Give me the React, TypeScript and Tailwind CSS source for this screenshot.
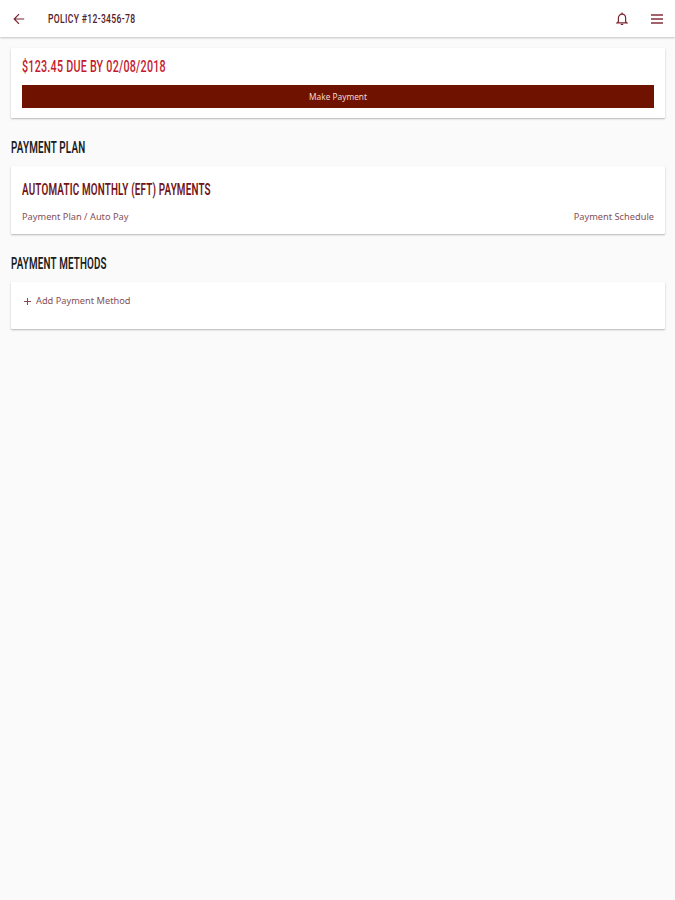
import type { ReactNode } from "react";
import clsx from "clsx";

// Narrow display lettering; callers pick the size and horizontal squeeze.
function Display({ className, children }: { className?: string; children: ReactNode }) {
  return (
    <span
      className={clsx(
        "block w-max origin-left whitespace-nowrap font-['Roboto',sans-serif] uppercase",
        className
      )}
    >
      {children}
    </span>
  );
}

function Card({ className, children }: { className?: string; children: ReactNode }) {
  return (
    <div
      className={clsx(
        "rounded-[1px] bg-white px-[11px] shadow-[0_1px_2px_rgba(0,0,0,0.28)]",
        className
      )}
    >
      {children}
    </div>
  );
}

function BackIcon() {
  return (
    <svg width="12" height="12" viewBox="0 0 12 12" fill="none" stroke="#7c2430" strokeWidth="1.2">
      <path d="M11.2 6H1.4M6 1.2 1.2 6 6 10.8" />
    </svg>
  );
}

function BellIcon() {
  return (
    <svg width="12" height="14" viewBox="0 0 12 14" fill="none" stroke="#7c2430" strokeWidth="1.2">
      <path d="M2.4 9.8V6.1C2.4 3.8 3.9 2.2 6 2.2s3.6 1.6 3.6 3.9v3.7l1.2 1H1.2l1.2-1Z" />
      <path d="M6 .6v1.6M4.8 12.4h2.4" />
    </svg>
  );
}

function MenuIcon() {
  return (
    <svg width="12" height="10" viewBox="0 0 12 10" fill="none" stroke="#84303c" strokeWidth="1.3">
      <path d="M0 1h12M0 5h12M0 9h12" />
    </svg>
  );
}

export default function App() {
  return (
    <div className="min-h-screen bg-[#fafafa] font-['Noto_Sans',sans-serif] text-[9.25px] text-[#855058]">
      <header className="flex h-[37px] items-center bg-white pr-3 pl-[13px] shadow-[0_1px_2px_rgba(0,0,0,0.22)]">
        <button aria-label="Back">
          <BackIcon />
        </button>
        <h1 className="ml-[23px] flex-1">
          <Display className="scale-x-[0.66] text-[13px] leading-[37px] font-medium tracking-[0.5px] text-[#55202a]">
            Policy #12-3456-78
          </Display>
        </h1>
        <button aria-label="Notifications">
          <BellIcon />
        </button>
        <button aria-label="Menu" className="ml-[23px]">
          <MenuIcon />
        </button>
      </header>

      <main className="pt-[11px] pr-[10px] pl-[11px]">
        <Card className="h-[70px] pt-[7px]">
          <Display className="scale-x-[0.63] text-[17px] leading-[22px] font-medium tracking-[0.4px] text-[#c4192d]">
            $123.45 due by 02/08/2018
          </Display>
          <button className="mt-2 block h-[23px] w-full bg-[#701200] text-[8.3px] leading-[23px] text-[#eed9d6]">
            Make Payment
          </button>
        </Card>

        <h2 className="mt-[18px]">
          <Display className="scale-x-[0.58] text-[17px] leading-[22px] font-semibold tracking-[0.3px] text-[#1c1c1c]">
            Payment Plan
          </Display>
        </h2>
        <Card className="mt-2 h-[68px] pt-[12px]">
          <Display className="scale-x-[0.58] text-[17px] leading-[22px] font-semibold tracking-[0.3px] text-[#701419]">
            Automatic Monthly (EFT) Payments
          </Display>
          <div className="mt-[10px] flex justify-between leading-[14px]">
            <a>Payment Plan / Auto Pay</a>
            <a>Payment Schedule</a>
          </div>
        </Card>

        <h2 className="mt-[18px]">
          <Display className="scale-x-[0.578] text-[17px] leading-[22px] font-semibold tracking-[0.3px] text-[#1c1c1c]">
            Payment Methods
          </Display>
        </h2>
        <Card className="mt-2 h-[47px] pt-[12px]">
          <button className="flex items-center leading-[14px]">
            <svg width="7" height="7" viewBox="0 0 7 7" stroke="#8a4a54" className="ml-[2px]">
              <path d="M3.5 0v7M0 3.5h7" />
            </svg>
            <span className="ml-[5px]">Add Payment Method</span>
          </button>
        </Card>
      </main>
    </div>
  );
}
